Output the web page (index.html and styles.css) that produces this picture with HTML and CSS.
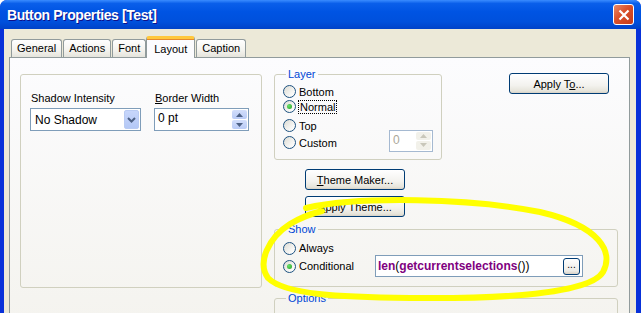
FILE: index.html
```html
<!DOCTYPE html>
<html>
<head>
  <meta charset="UTF-8">
  <title>Button Properties [Test]</title>
  <link rel="stylesheet" href="styles.css">
</head>
<body>
  <div class="window">
    <div class="titlebar">
      <span class="title">Button Properties [Test]</span>
      <span class="close">
        <svg width="12" height="12" viewBox="0 0 12 12"><path d="M1.5 1.5 L10.5 10.5 M10.5 1.5 L1.5 10.5" stroke="#fff" stroke-width="2.2"/></svg>
      </span>
    </div>

    <div class="client">
      <div class="tabs">
        <div class="tab">General</div>
        <div class="tab">Actions</div>
        <div class="tab">Font</div>
        <div class="tab active">Layout</div>
        <div class="tab">Caption</div>
      </div>

      <div class="panel">
        <div class="group plain">
          <div class="fields">
            <div class="field">
              <label>Shadow Intensity</label>
              <div class="combo">
                <span class="val">No Shadow</span>
                <span class="drop">
                  <svg width="9" height="6" viewBox="0 0 9 6"><path d="M1 1 L4.5 4.5 L8 1" fill="none" stroke="#4d6185" stroke-width="2"/></svg>
                </span>
              </div>
            </div>
            <div class="field">
              <label><u>B</u>order Width</label>
              <div class="spin wide">
                <span class="val">0 pt</span>
                <span class="arrows">
                  <span class="arr"><svg width="7" height="4" viewBox="0 0 7 4"><path d="M0 4 L3.5 0 L7 4Z" fill="#4d6185"/></svg></span>
                  <span class="arr"><svg width="7" height="4" viewBox="0 0 7 4"><path d="M0 0 L3.5 4 L7 0Z" fill="#4d6185"/></svg></span>
                </span>
              </div>
            </div>
          </div>
        </div>

        <div class="right">
          <div class="toprow">
            <fieldset class="layer">
              <legend>Layer</legend>
              <div class="opt"><span class="radio"></span>Bottom</div>
              <div class="opt"><span class="radio on"></span><span class="focus">Normal</span></div>
              <div class="opt gap4"><span class="radio"></span>Top</div>
              <div class="opt gap2">
                <span class="radio"></span>Custom
                <div class="spin off">
                  <span class="val">0</span>
                  <span class="arrows">
                    <span class="arr"><svg width="7" height="4" viewBox="0 0 7 4"><path d="M0 4 L3.5 0 L7 4Z" fill="#c9c7ba"/></svg></span>
                    <span class="arr"><svg width="7" height="4" viewBox="0 0 7 4"><path d="M0 0 L3.5 4 L7 0Z" fill="#c9c7ba"/></svg></span>
                  </span>
                </div>
              </div>
            </fieldset>
            <button class="btn apply-to">Apply T<u>o</u>...</button>
          </div>

          <button class="btn theme"><u>T</u>heme Maker...</button>
          <button class="btn theme second"><u>A</u>pply Theme...</button>

          <fieldset class="show">
            <legend>Show</legend>
            <div class="opt"><span class="radio"></span>Always</div>
            <div class="opt">
              <span class="radio on"></span><span class="cond-label">Conditional</span>
              <div class="expr">
                <span class="fn">len</span>(<span class="fn">getcurrentselections</span>())
                <span class="dots">...</span>
              </div>
            </div>
          </fieldset>

          <fieldset class="options">
            <legend>Options</legend>
          </fieldset>
        </div>
      </div>
    </div>

    <svg class="marker" width="641" height="313" viewBox="0 0 641 313">
      <path d="M306 208 C 360 196, 470 198, 540 212 C 600 226, 614 252, 603 272 C 590 294, 500 299, 410 298 C 340 297, 285 295, 268 278 C 257 263, 268 238, 290 224 C 300 218, 310 214, 322 211" fill="none" stroke="#ffff00" stroke-width="6" stroke-linecap="round"/>
    </svg>
  </div>
</body>
</html>
```

FILE: styles.css
```css
body {
  margin: 0;
  width: 641px;
  height: 313px;
  overflow: hidden;
  font-family: "Liberation Sans", Arial, sans-serif;
  font-size: 11px;
  color: #000;
}
.window {
  position: relative;
  width: 641px;
  height: 313px;
  background: #0831d9;
  border-radius: 7px 7px 0 0;
  display: flex;
  flex-direction: column;
  overflow: hidden;
}
.titlebar {
  height: 29px;
  flex: none;
  display: flex;
  align-items: center;
  padding: 0 7px 0 7px;
  background: linear-gradient(#3a8cff 0%, #0a5fea 12%, #0054e3 40%, #0050dc 75%, #0042c8 100%);
}
.title {
  color: #fff;
  font-weight: bold;
  font-size: 14px;
  letter-spacing: -0.4px;
  text-shadow: 1px 1px #0f1089;
  flex: 1;
  margin-top: 1px;
}
.close {
  width: 19px;
  height: 19px;
  border: 1px solid #fff;
  border-radius: 3px;
  background: linear-gradient(135deg, #e88a6a, #d9502a 45%, #c53b1a);
  display: flex;
  align-items: center;
  justify-content: center;
}
.client {
  flex: 1;
  background: #ece9d8;
  margin: 0 5px 0 4px;
  padding: 6px 6px 0 5px;
  display: flex;
  flex-direction: column;
}
.tabs {
  display: flex;
  padding-left: 2px;
  height: 22px;
  align-items: flex-end;
}
.tab {
  height: 17px;
  line-height: 17px;
  padding: 0 5px;
  margin-right: 1px;
  border: 1px solid #919b9c;
  border-bottom: none;
  border-radius: 3px 3px 0 0;
  background: linear-gradient(#fff, #f4f3ee 60%, #e5e4dc);
}
.tab.active {
  height: 19px;
  line-height: 20px;
  padding: 0 7px;
  margin: 0 1px -1px -1px;
  border-top: 3px solid #ffc83c;
  box-shadow: inset 0 1px #e68b2c;
  background: #fcfcfe;
  position: relative;
  z-index: 1;
}
.panel {
  flex: 1;
  border: 1px solid #919b9c;
  border-bottom: none;
  background: linear-gradient(#fcfcfe, #f4f3ee);
  display: flex;
  align-items: flex-start;
  padding: 16px 0 0 10px;
  gap: 12px;
}
.group.plain {
  width: 240px;
  height: 212px;
  border: 1px solid #d0d0bf;
  border-radius: 3px;
}
.fields {
  display: flex;
  gap: 13px;
  padding: 17px 0 0 9px;
}
.field label {
  display: block;
  margin: 0 0 3px 1px;
  line-height: 13px;
}
.combo, .spin {
  height: 21px;
  border: 1px solid #7f9db9;
  background: #fff;
  display: flex;
  align-items: center;
  justify-content: space-between;
}
.combo {
  width: 109px;
}
.combo .val {
  font-size: 12px;
  padding-left: 4px;
  margin-top: 1px;
}
.drop {
  width: 15px;
  height: 19px;
  margin-right: 1px;
  border-radius: 2px;
  background: linear-gradient(#c7d6fb, #b4c8f6);
  border: 1px solid #b9cbf3;
  box-sizing: border-box;
  display: flex;
  align-items: center;
  justify-content: center;
}
.spin.wide {
  width: 93px;
  align-items: stretch;
}
.spin .val {
  font-size: 12px;
  padding: 2px 0 0 3px;
}
.arrows {
  width: 15px;
  display: flex;
  flex-direction: column;
  margin: 1px 1px 1px 0;
  gap: 1px;
}
.arr {
  flex: 1;
  background: linear-gradient(#d2defb, #b9cbf6);
  border-radius: 2px;
  display: flex;
  align-items: center;
  justify-content: center;
}
.right {
  width: 344px;
  display: flex;
  flex-direction: column;
  align-items: flex-start;
}
.toprow {
  display: flex;
  align-items: flex-start;
  width: 100%;
}
fieldset {
  margin: 0;
  min-width: 0;
  border: 1px solid #d0d0bf;
  border-radius: 3px;
  box-sizing: border-box;
}
legend {
  color: #0046d5;
  padding: 0 2px;
  margin-left: 3px;
  line-height: 12px;
}
.layer {
  width: 168px;
  height: 92px;
  margin-top: -6px;
  padding: 4px 8px 0 8px;
}
.opt {
  display: flex;
  align-items: center;
  height: 15px;
  gap: 3px;
}
.opt.gap4 {
  margin-top: 4px;
}
.opt.gap2 {
  margin-top: 2px;
}
.radio {
  width: 11px;
  height: 11px;
  border: 1px solid #1c5180;
  border-radius: 50%;
  background: linear-gradient(135deg, #dcdbd3, #f8f8f6 70%, #fff);
  display: inline-flex;
  align-items: center;
  justify-content: center;
  flex: none;
}
.radio.on::after {
  content: "";
  width: 5px;
  height: 5px;
  border-radius: 50%;
  background: radial-gradient(circle at 35% 35%, #69e06c, #21a121);
}
.focus {
  outline: 1px dotted #000;
  padding: 0 1px;
}
.spin.off {
  width: 42px;
  height: 20px;
  margin: -6px 0 -2px auto;
  border-color: #a5b9d1;
  align-items: stretch;
}
.spin.off .val {
  color: #aca899;
}
.spin.off .arr {
  background: #f2f1ea;
}
.btn {
  font-family: "Liberation Sans", Arial, sans-serif;
  font-size: 11px;
  width: 100px;
  height: 21px;
  padding: 0;
  border: 1px solid #003c74;
  border-radius: 3px;
  background: linear-gradient(#ffffff, #f3f2ee 60%, #e6e4da 90%, #d6d0c5);
  color: #000;
}
.apply-to {
  margin: -1px 0 0 67px;
}
.theme {
  margin: 9px 0 0 31px;
}
.theme.second {
  margin-top: 6px;
}
.show {
  width: 344px;
  height: 64px;
  margin-top: 6px;
  padding: 4px 8px 0 8px;
}
.show .opt {
  height: 18px;
}
.cond-label {
  width: 73px;
}
.expr {
  width: 204px;
  height: 20px;
  border: 1px solid #7f9db9;
  background: #fff;
  display: flex;
  align-items: center;
  padding-left: 2px;
  font-size: 12px;
}
.fn {
  color: #800080;
  font-weight: bold;
}
.dots {
  margin-left: auto;
  margin-right: 2px;
  width: 15px;
  height: 15px;
  border: 1px solid #003c74;
  border-radius: 3px;
  background: linear-gradient(#fff, #ecebe6 80%, #d6d0c5);
  font-size: 10px;
  line-height: 12px;
  text-align: center;
}
.options {
  width: 344px;
  height: 40px;
  margin-top: 5px;
  padding: 0 8px;
}
.marker {
  position: absolute;
  left: 0;
  top: 0;
  pointer-events: none;
  z-index: 5;
}
```
